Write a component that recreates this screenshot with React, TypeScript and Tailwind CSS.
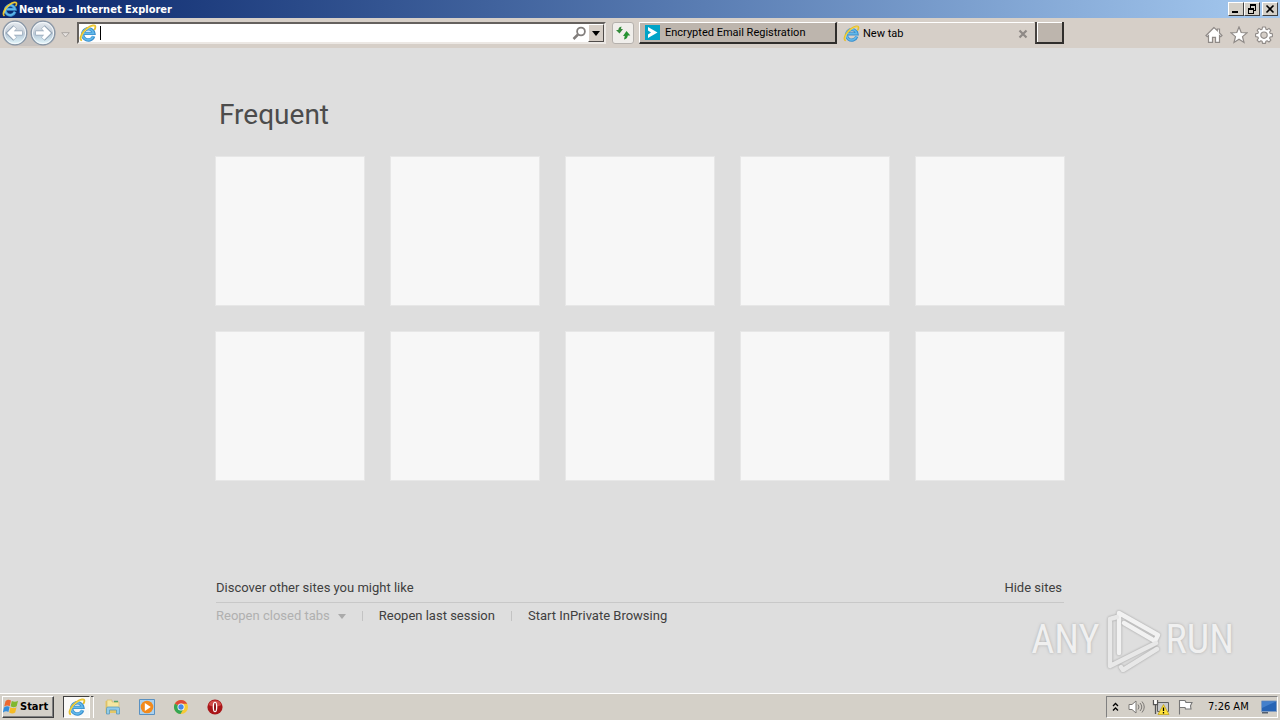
import React from "react";

function IELogo({ className }: { className: string }) {
  return (
    <svg viewBox="0 0 18 18" className={className} aria-hidden="true" fill="none">
      <path d="M14.6 12.2A5.600 5.600 0 1 1 14.800 9.400H4.800" stroke="#3a8fce" strokeWidth="3.400" />
      <path d="M14.400 12A5.600 5.600 0 1 1 14.600 9.300H5" stroke="#62b9ea" strokeWidth="1.700" />
      <path d="M2.200 16.200C.2 14 3 8.200 8.200 4.200 12.400 1 16.400.6 16.400 2.800c0 .9-.2 1.600-.7 2.400" stroke="#e6bf2c" strokeWidth="1.800" strokeLinecap="round" />
      <path d="M2.200 14.500C2.800 10.500 6 6.200 9.500 4 12.500 2 15 1.600 15.800 2.400" stroke="#f8e058" strokeWidth=".8" />
    </svg>
  );
}

function NavButton({ label, back }: { label: string; back?: boolean }) {
  return (
    <button aria-label={label} className="size-[26px] shrink-0">
      <svg viewBox="0 0 26 26" className="size-[26px]" fill="none">
        <defs>
          <linearGradient id={back ? "nb" : "nf"} x1="0" y1="0" x2="0" y2="1">
            <stop offset="0" stopColor="#e8edf2" />
            <stop offset=".48" stopColor="#c3ccd6" />
            <stop offset=".55" stopColor="#b8c9d8" />
            <stop offset="1" stopColor="#e6fbff" />
          </linearGradient>
        </defs>
        <circle cx="13" cy="13" r="11.800" fill={back ? "url(#nb)" : "url(#nf)"} stroke="#8795a5" strokeWidth="1.300" />
        <circle cx="13" cy="13" r="10.600" stroke="#f4f8fb" />
        <path
          d={back ? "M20.500 13H8M13 7 7 13l6 6" : "M5.500 13H18M13 7l6 6-6 6"}
          stroke="#91a3b5"
          strokeWidth="5"
        />
        <path
          d={back ? "M20 13H8M13 7.500 7.500 13l5.500 5.500" : "M6 13h12M13 7.500 18.500 13 13 18.500"}
          stroke="#fff"
          strokeWidth="3.600"
        />
      </svg>
    </button>
  );
}

const winButton =
  "flex h-[14px] w-4 items-center justify-center border border-t-white border-l-white border-r-[#404040] border-b-[#404040] bg-[#d4d0c8]";

function TitleBar() {
  return (
    <header className="flex h-[18px] items-center bg-linear-to-r from-[#0a246a] to-[#a6caf0] px-0.5">
      <IELogo className="size-4" />
      <h1 className="ml-px flex-1 pt-px text-[11px] leading-4 font-bold text-white font-['DejaVu_Sans_Condensed','Noto_Sans',sans-serif]">
        New tab - Internet Explorer
      </h1>
      <button aria-label="Minimize" className={winButton}>
        <svg viewBox="0 0 12 10" className="h-[10px] w-3"><path d="M2 7h6v2H2z" /></svg>
      </button>
      <button aria-label="Restore" className={winButton}>
        <svg viewBox="0 0 12 10" className="h-[10px] w-3" fill="none" stroke="#000" shapeRendering="crispEdges">
          <path d="M4 .5h6M4 1.500h6M4.500 2v2M9.500 2v4H8M2 4.500h6M2 5.500h6M2.500 6v3.500h5V6" />
        </svg>
      </button>
      <button aria-label="Close" className={`${winButton} ml-0.5`}>
        <svg viewBox="0 0 12 10" className="h-[10px] w-3"><path d="m2.500 1.500 7 7m0-7-7 7" stroke="#000" strokeWidth="1.600" /></svg>
      </button>
    </header>
  );
}

function Toolbar() {
  return (
    <div className="flex h-[30px] items-start bg-[#d6cfc8] pt-1 pr-[7px] pl-[2px]">
      <div className="-mt-[2px] flex gap-[2px] rounded-full bg-[#c7c2bf]">
        <NavButton label="Back" back />
        <NavButton label="Forward" />
      </div>
      <button aria-label="Recent pages" className="ml-[3px] flex h-[22px] w-[13px] items-center justify-center">
        <svg viewBox="0 0 9 6" className="mt-1 h-1.5 w-[9px]"><path d="M.7.7h7.600L4.500 5z" fill="#e6e2df" stroke="#aaa5a2" /></svg>
      </button>
      <form className="ml-[5px] flex h-[22px] min-w-0 flex-1 items-center border-2 border-t-[#65615e] border-r-[#ece8e4] border-b-[#ece8e4] border-l-[#65615e] bg-white">
        <IELogo className="size-[18px] shrink-0" />
        <span className="ml-[3px] h-[14px] w-px bg-black" />
        <input aria-label="Address" className="h-4 min-w-0 flex-1 bg-transparent px-1 text-xs outline-none" />
        <button type="button" aria-label="Search" className="mr-px">
          <svg viewBox="0 0 15 15" className="size-[15px]" fill="none" stroke="#827e7c">
            <circle cx="9" cy="5.500" r="3.900" strokeWidth="1.800" />
            <path d="m6 8.500-4.500 4.500" strokeWidth="2.500" />
          </svg>
        </button>
        <button type="button" aria-label="Show address list" className="flex h-[18px] w-4 items-center justify-center border border-t-white border-r-[#504c4a] border-b-[#504c4a] border-l-white bg-[#d6cec6]">
          <svg viewBox="0 0 8 5" className="h-[5px] w-2"><path d="M0 0h8L4 5z" /></svg>
        </button>
      </form>
      <button aria-label="Refresh" className="ml-1.5 flex size-[22px] items-center justify-center rounded-[3px] border border-[#b5b1ad] bg-[#f0eeeb]">
        <svg viewBox="0 0 16 16" className="size-4">
          <path d="M6.500 1.500 6 4h2L4.500 8.500 1 5h2.300C3.500 3 4.500 1.800 6.500 1.500z" fill="#338a3a" />
          <path d="M9 14.500 9.800 11H8l3.500-5 3.800 4.500h-2.500c-.2 2.300-1.500 3.600-3.800 4z" fill="#269332" />
        </svg>
      </button>
      <div role="tablist" className="ml-[5px] flex h-[22px] shrink-0 text-[11px] leading-4 font-[Roboto,'Noto_Sans',sans-serif]">
        <button role="tab" aria-selected="false" className="flex w-[198px] items-center border-t border-r-2 border-b-2 border-l border-t-white border-r-[#302e2c] border-b-[#302e2c] border-l-white bg-[#bdb5ad] pl-[5px] whitespace-nowrap">
          <svg viewBox="0 0 15 15" className="size-[15px]">
            <path d="M0 0h15v15H0z" fill="#00a3c7" />
            <path d="m3 2 9.500 5.500L3 13V9.500l3-2-3-2z" fill="#fff" />
          </svg>
          <span className="ml-[5px] pt-px">Encrypted Email Registration</span>
        </button>
        <div className="ml-px flex w-[196px] items-center border-t border-white pr-[5px] pl-[5px]">
          <button role="tab" aria-selected="true" className="flex flex-1 items-center">
            <IELogo className="size-[17px]" />
            <span className="ml-[3px]">New tab</span>
          </button>
          <button aria-label="Close tab" className="flex size-3 items-center justify-center">
            <svg viewBox="0 0 10 10" className="size-[10px]"><path d="m1.500 1.500 7 7m0-7-7 7" stroke="#8e8986" strokeWidth="2.200" /></svg>
          </button>
        </div>
        <button aria-label="New tab" className="ml-px w-[29px] border-r-2 border-b-2 border-l-2 border-r-[#302e2c] border-b-[#302e2c] border-l-[#474340] bg-[#bdb5ad] shadow-[inset_1px_1px_#fff]" />
      </div>
      <div className="ml-[141px] flex gap-[7px] pt-1">
        <button aria-label="Home">
          <svg viewBox="0 0 18 18" className="size-[18px]" fill="#fff" stroke="#8f8a87" strokeWidth="1.200">
            <path d="M9 1.500 1 9.500l1.200 1.200L3.500 9.500v6.800h4v-5h3v5h4V9.500l1.300 1.200L17 9.500l-2.500-2.600V3h-2.200v1.700z" />
          </svg>
        </button>
        <button aria-label="Favorites">
          <svg viewBox="0 0 18 18" className="size-[18px]" fill="#fff" stroke="#8f8a87" strokeWidth="1.200">
            <path d="m9 1 2.200 5.500 5.800.4-4.500 3.700 1.500 5.900-5-3.300-5 3.300 1.500-5.900L1 6.900l5.800-.4z" />
          </svg>
        </button>
        <button aria-label="Tools">
          <svg viewBox="0 0 18 18" className="size-[18px]" fill="#fff" stroke="#8f8a87" strokeWidth="1.100" strokeLinejoin="round">
            <path
              fillRule="evenodd"
              d="M7.500 1h3l.4 2.200 1.200.5L14 2.400 15.900 4.300 14.600 6.100l.5 1.300 2.300.4v2.800l-2.300.4-.5 1.200 1.300 1.900-1.900 1.900-1.900-1.300-1.200.5-.4 2.200h-3l-.4-2.200-1.200-.5L4 16 2.100 14.100l1.300-1.900-.5-1.200-2.300-.4V7.800l2.300-.4.500-1.300L2.100 4.300 4 2.400l1.900 1.300 1.200-.5zM9 6a3.200 3.200 0 1 0 0 6.400A3.200 3.200 0 1 0 9 6z"
            />
          </svg>
        </button>
      </div>
    </div>
  );
}

function Watermark() {
  return (
    <div className="absolute right-[46px] bottom-[21px] flex items-center text-[40px] leading-[62px] text-[#f0f0f0] font-['Roboto_Condensed','Liberation_Sans_Narrow','Liberation_Sans',sans-serif] [text-shadow:0_0_3px_#aaa]">
      <span>ANY</span>
      <svg viewBox="0 0 58 64" className="mx-1 h-16 w-[58px] drop-shadow-[0_0_1px_#999]" fill="none" strokeLinejoin="round" strokeLinecap="round" strokeWidth="4.500">
        <path d="M15 45V5L54 27l-3 6-31-18" stroke="#f2f2f2" />
        <path d="M13 9 6 11v47l46-23M17 59l2 3 34-21" stroke="#e8e8e8" />
      </svg>
      <span>RUN</span>
    </div>
  );
}

function NewTabPage() {
  return (
    <main className="relative flex-1 bg-[#dedede] px-4 pt-[49px]">
      <div className="mx-auto max-w-[848px]">
        <h2 className="pl-[3px] text-[28px] leading-9 text-[#4c4c4c] font-[Roboto,'Noto_Sans',sans-serif]">Frequent</h2>
        <div className="mt-6 grid grid-cols-5 gap-[27px]">
          {Array.from({ length: 10 }, (_, i) => (
            <div key={i} className="aspect-square bg-[#f7f7f7] outline outline-[#e7e7e7]" />
          ))}
        </div>
        <div className="mt-[98px] text-[13px] leading-5 text-[#404040] font-[Roboto,'Noto_Sans',sans-serif]">
          <div className="flex justify-between border-b border-[#c8c8c8] pr-0.5 pb-1">
            <button>Discover other sites you might like</button>
            <button>Hide sites</button>
          </div>
          <div className="flex items-center pt-[3px]">
            <button disabled className="flex items-center gap-2 whitespace-nowrap text-[#b0b0b0]">
              Reopen closed tabs
              <svg viewBox="0 0 8 5" className="h-[5px] w-2"><path d="M0 0h8L4 5z" fill="#aaa" /></svg>
            </button>
            <span className="mx-4 h-[10px] w-px bg-[#c3c3c3]" />
            <button className="whitespace-nowrap">Reopen last session</button>
            <span className="mx-4 h-[10px] w-px bg-[#c3c3c3]" />
            <button className="whitespace-nowrap">Start InPrivate Browsing</button>
          </div>
        </div>
      </div>
      <Watermark />
    </main>
  );
}

function Taskbar() {
  return (
    <footer className="flex h-[27px] items-center border-t border-white bg-[#d4d0c8] pr-0.5 pl-[2px]">
      <button className="flex h-[22px] w-[52px] items-center border border-t-white border-r-[#404040] border-b-[#404040] border-l-white text-[11px] font-bold shadow-[inset_-1px_-1px_#808080] font-['DejaVu_Sans_Condensed','Noto_Sans',sans-serif]">
        <svg viewBox="0 0 16 16" className="size-4 shrink-0">
          <path d="M2.500 2.200Q5-.2 8 1.600L6.800 7Q3.700 5.700 1.200 7.600z" fill="#ee6930" />
          <path d="M8.800 2q3.200 1.500 6.200-.2L13.700 7.300Q10.500 9 7.600 7.300z" fill="#80b82f" />
          <path d="M1 8.400q2.800-2 5.600-.6L5.400 13Q3 11.500-.2 13.500z" fill="#348edd" />
          <path d="M7.400 8.200q3 1.700 6.100 0L12.200 13.600q-3 1.900-6 0z" fill="#f5bb25" />
        </svg>
        <span className="ml-px">Start</span>
      </button>
      <button aria-label="Internet Explorer" className="ml-[9px] flex h-[22px] w-[27px] items-center justify-center border border-t-[#404040] border-r-white border-b-white border-l-[#404040] bg-[#faf9f7]">
        <IELogo className="size-[18px]" />
      </button>
      <span className="ml-px h-[22px] w-[3px] border-t border-r border-t-[#404040] border-r-white bg-[#d4d0c8]" />
      <button aria-label="File Explorer" className="ml-[10px] size-[18px]">
        <svg viewBox="0 0 18 18" className="size-[18px]">
          <path d="M1.500 3h6l1 1.500H15V15H1.500z" fill="#e5c765" />
          <path d="M3 2h5v2h7v7H3z" fill="#f5e6a0" stroke="#d0b566" strokeWidth=".6" />
          <path d="M10 3.500h4" stroke="#54a46b" strokeWidth="1.500" />
          <path d="M2.500 16v-5.500q0-1.500 1.500-1.500h10q1.500 0 1.500 1.500V16h-3v-4h-7v4z" fill="#91cbe9" stroke="#5293b8" strokeWidth=".7" />
        </svg>
      </button>
      <button aria-label="Media Player" className="ml-4 size-[18px]">
        <svg viewBox="0 0 18 18" className="size-[18px]">
          <path d="M1.500 1.500h15v15h-15z" fill="#aad1ef" stroke="#5a91c1" />
          <circle cx="9" cy="9" r="6.300" fill="#f28a1c" />
          <path d="M6.800 5v8l6-4z" fill="#fff" />
        </svg>
      </button>
      <button aria-label="Chrome" className="ml-4 size-[18px]">
        <svg viewBox="0 0 18 18" className="size-[18px]">
          <circle cx="9" cy="9" r="7" fill="#f7ca36" />
          <path d="M9 9 2.900 5.500A7 7 0 0 0 8.500 16L12 10z" fill="#35a654" />
          <path d="M9 9 2.900 5.500A7 7 0 0 1 15.200 5.700H9z" fill="#de4939" />
          <circle cx="9" cy="9" r="3.500" fill="#fff" />
          <circle cx="9" cy="9" r="2.700" fill="#4688e8" />
        </svg>
      </button>
      <button aria-label="Opera" className="ml-4 size-[18px]">
        <svg viewBox="0 0 18 18" className="size-[18px]">
          <circle cx="9" cy="9" r="7.600" fill="#a91518" />
          <path d="M2.500 7a7 7 0 0 1 13 0Q9 10 2.500 7" fill="#d14b48" />
          <ellipse cx="9" cy="9" rx="2.300" ry="5.300" fill="#fff" />
          <ellipse cx="9" cy="9" rx="1" ry="4.300" fill="#8c1013" />
        </svg>
      </button>
      <div className="ml-auto flex h-[22px] w-[172px] items-center border border-t-[#808080] border-r-white border-b-white border-l-[#808080] pl-[5px] text-[11px] font-['DejaVu_Sans_Condensed','Noto_Sans',sans-serif]">
        <button aria-label="Show hidden icons">
          <svg viewBox="0 0 7 10" className="h-[10px] w-[7px]" fill="none" stroke="#000" strokeWidth="1.300"><path d="m1 4 2.500-2.500L6 4M1 8.500 3.500 6 6 8.500" /></svg>
        </button>
        <button aria-label="Volume" className="ml-[9px]">
          <svg viewBox="0 0 18 16" className="h-4 w-[18px]" fill="none" stroke="#7b7875">
            <path d="M1 5.500h3L8 2v12l-4-3.500H1z" fill="#fff" />
            <path d="M10 5.500q2 2.500 0 5M12 4q3.500 4 0 8M14 2.500q4.500 5.500 0 11" />
          </svg>
        </button>
        <button aria-label="Network" className="ml-[6px]">
          <svg viewBox="0 0 18 16" className="h-4 w-[18px]">
            <path d="M5.500 3.500h11v9h-11z" fill="#c8cacc" stroke="#5e6063" />
            <path d="M1.500 1v4.500h4V1M3.500 5v10" fill="none" stroke="#555" strokeWidth="1.300" />
            <path d="M2.200 1h2.600v4H2.200z" fill="#fff" />
            <path d="M7 13h5v2H7z" fill="#777" />
            <path d="m11.500 5.500 5.500 10H6z" fill="#ffe33b" stroke="#bd9c11" strokeWidth=".7" />
            <path d="M11.500 8.500v3.500m0 1v1.500" stroke="#000" strokeWidth="1.300" />
          </svg>
        </button>
        <button aria-label="Action Center" className="ml-[7px]">
          <svg viewBox="0 0 16 16" className="size-4" fill="#fff" stroke="#777" strokeWidth="1.100">
            <path d="M2.500 15.500v-14h5q1 0 1.500 2h6l-1.500 3.300L14 10H8.500L8 8.500H2.500" />
          </svg>
        </button>
        <time className="ml-[15px] whitespace-nowrap">7:26 AM</time>
        <button aria-label="Show desktop" className="ml-auto">
          <svg viewBox="0 0 16 14" className="h-[14px] w-4">
            <path d="M.5 1h15v10.500H.5z" fill="#2764b5" stroke="#839dc0" />
            <path d="M1 1.500h14L1 8z" fill="#4480cc" />
            <path d="M1 12h6v1.500H1z" fill="#55606e" />
          </svg>
        </button>
      </div>
    </footer>
  );
}

export default function App() {
  return (
    <div className="flex min-h-screen flex-col bg-[#dedede] text-black">
      <TitleBar />
      <Toolbar />
      <NewTabPage />
      <Taskbar />
    </div>
  );
}
